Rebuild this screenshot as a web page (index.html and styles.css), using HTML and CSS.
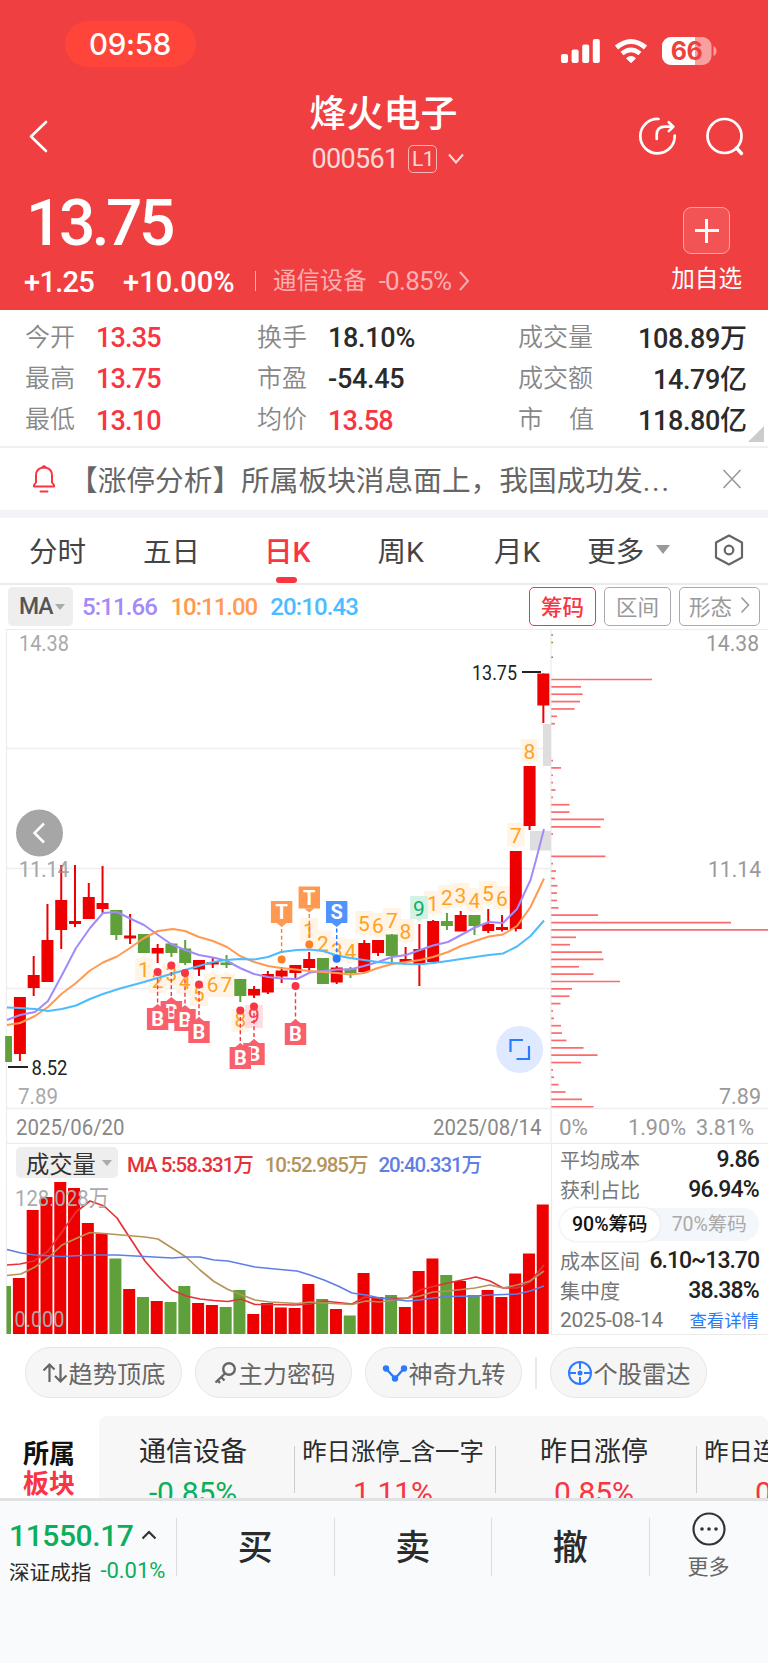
FILE: index.html
```html
<!DOCTYPE html>
<html lang="zh-CN">
<head>
<meta charset="utf-8">
<title>烽火电子</title>
<link rel="stylesheet" href="styles.css">
</head>
<body>
<header class="head">
  <div class="status">
    <span class="clock">09:58</span>
    <span class="signals">
      <svg width="39" height="28" viewBox="0 0 39 28" fill="#fff"><rect x="0" y="17" width="7" height="9" rx="2"/><rect x="10.6" y="12.500" width="7" height="13.500" rx="2"/><rect x="21.200" y="7.500" width="7" height="18.500" rx="2"/><rect x="31.800" y="2" width="7" height="24" rx="2"/></svg>
      <svg class="wifi" width="34" height="28" viewBox="0 0 34 28" fill="none" stroke="#fff" stroke-width="5"><path d="M2.500 10.500Q17-1.500 31.500 10.500"/><path d="M8 16.500Q17 9.200 26 16.500" stroke-width="4.600"/><path d="M12 21.200Q17 16.800 22 21.200L17 26.200Z" fill="#fff" stroke="none"/></svg>
      <svg width="55" height="28" viewBox="0 0 55 28"><defs><clipPath id="bt"><rect width="49.500" height="28" rx="9"/></clipPath></defs><g clip-path="url(#bt)"><rect width="50" height="28" fill="#f89fa0"/><rect width="33" height="28" fill="#fff"/></g><path d="M51.500 9q3 1.500 3 5t-3 5z" fill="#f89fa0"/><text x="24.500" y="23" text-anchor="middle" class="bat">66</text></svg>
    </span>
  </div>
  <div class="titlebar">
    <svg class="back" width="20" height="34" viewBox="0 0 20 34" fill="none" stroke="#fff" stroke-width="2.600" stroke-linecap="round" stroke-linejoin="round"><path d="M17 3 2 17.500 17 32"/></svg>
    <div class="title">
      <h1>烽火电子</h1>
      <div class="code"><span class="num">000561</span><span class="lv">L1</span><svg width="16" height="12" viewBox="0 0 16 12" fill="none" stroke="#fcd9d9" stroke-width="2"><path d="M1 1.500 8 9.500 15 1.500"/></svg></div>
    </div>
    <div class="acts">
      <svg width="40" height="40" viewBox="0 0 40 40" fill="none" stroke="#fff" stroke-width="2.700" stroke-linecap="round" stroke-linejoin="round"><path d="M20.500 2A17.200 17.200 0 1 0 36.700 18.500"/><path d="M18.700 22V18Q18.700 9.700 27 9.700H35"/><path d="M30.800 5.300 35.200 9.700 30.800 14.100"/></svg>
      <svg width="40" height="40" viewBox="0 0 40 40" fill="none" stroke="#fff" stroke-width="2.700" stroke-linecap="round"><circle cx="19.500" cy="19" r="17"/><path d="M31.500 31 36.500 36.500" stroke-width="3.400"/></svg>
    </div>
  </div>
  <div class="quote">
    <div class="ql">
      <div class="price">13.75</div>
      <div class="chg"><b>+1.25</b><b class="pct">+10.00%</b><i></i><span>通信设备</span><em>-0.85%</em><svg width="12" height="22" viewBox="0 0 12 22" fill="none" stroke="#f9b0b0" stroke-width="2"><path d="M2 2 10 11 2 20"/></svg></div>
    </div>
    <div class="add"><span class="plus"></span><span>加自选</span></div>
  </div>
</header>

<section class="stats">
  <dl><dt>今开</dt><dd class="red">13.35</dd><dt>最高</dt><dd class="red">13.75</dd><dt>最低</dt><dd class="red">13.10</dd></dl>
  <dl><dt>换手</dt><dd>18.10%</dd><dt>市盈</dt><dd>-54.45</dd><dt>均价</dt><dd class="red">13.58</dd></dl>
  <dl class="wide"><dt>成交量</dt><dd>108.89万</dd><dt>成交额</dt><dd>14.79亿</dd><dt class="jf"><span>市</span><span>值</span></dt><dd>118.80亿</dd></dl>
  <i class="corner"></i>
</section>

<section class="notice">
  <svg width="26" height="30" viewBox="0 0 26 30" fill="none" stroke="#f93443" stroke-width="2" stroke-linejoin="round" stroke-linecap="round"><path d="M3 22.500V21l2-2.500V11.500Q5 4 13 3.500 21 4 21 11.500v7L23 21v1.500Z"/><path d="M11.500 3q1.500-1.500 3 0M9.500 27.500h7"/></svg>
  <p>【涨停分析】所属板块消息面上，我国成功发<span>...</span></p>
  <svg width="20" height="20" viewBox="0 0 20 20" stroke="#999" stroke-width="1.600"><path d="M1.500 1 18.500 19M18.500 1 1.500 19"/></svg>
</section>

<nav class="tabs">
  <span>分时</span><span>五日</span><span class="on">日K</span><span>周K</span><span>月K</span><span class="more">更多<i class="tri"></i></span>
  <svg width="30" height="32" viewBox="0 0 30 32" fill="none" stroke="#666" stroke-width="2.200" stroke-linejoin="round"><path d="M15 1.500 28 8.500V23.500L15 30.500 2 23.500V8.500Z"/><circle cx="15" cy="16" r="4.300"/></svg>
</nav>

<section class="mabar">
  <span class="sel">MA<i class="tri"></i></span>
  <span class="m5">5:11.66</span><span class="m10">10:11.00</span><span class="m20">20:10.43</span>
  <span class="btns"><button class="on">筹码</button><button>区间</button><button class="go">形态<svg width="10" height="18" viewBox="0 0 10 18" fill="none" stroke="#999" stroke-width="1.600"><path d="M1.500 1.500 8.500 9 1.500 16.500"/></svg></button></span>
</section>

<svg id="kline" class="kline" width="768" height="515" viewBox="0 629 768 515"></svg>

<section class="lower">
  <div class="vol">
    <div class="volhead"><span class="sel">成交量<i class="tri"></i></span><span class="v5">MA 5:58.331万</span><span class="v10">10:52.985万</span><span class="v20">20:40.331万</span></div>
    <svg id="volume" class="volsvg" width="551" height="154" viewBox="0 1181 551 154"></svg>
  </div>
  <aside class="chips">
    <p><span>平均成本</span><b>9.86</b></p>
    <p><span>获利占比</span><b>96.94%</b></p>
    <div class="seg"><span class="on">90%筹码</span><span>70%筹码</span></div>
    <p><span>成本区间</span><b>6.10~13.70</b></p>
    <p><span>集中度</span><b>38.38%</b></p>
    <p class="last"><span>2025-08-14</span><a>查看详情</a></p>
  </aside>
</section>

<section class="tools">
  <span class="tool"><svg width="26" height="26" viewBox="0 0 26 26" fill="none" stroke="#666" stroke-width="2.200"><path d="M7.500 22V4.500M1.500 10.500 7.500 4.500 12.500 9.500M18.500 4V21.500M13 16 18.500 21.500 24.500 15.500"/></svg>趋势顶底</span>
  <span class="tool"><svg width="26" height="26" viewBox="0 0 26 26" fill="none" stroke="#666" stroke-width="2.400"><circle cx="17" cy="9" r="5.800"/><path d="M13 13.500 3.500 22.500M9 17 12.500 20.500M5.500 20 8 23"/></svg>主力密码</span>
  <span class="tool"><svg width="26" height="26" viewBox="0 0 26 26" fill="#2b7bff" stroke="#2b7bff" stroke-width="2.400"><path d="M4 8.500 13 18.500 22 8.500" fill="none"/><circle cx="4" cy="8.500" r="2"/><circle cx="22" cy="8.500" r="2"/><circle cx="13" cy="18.500" r="2"/></svg>神奇九转</span>
  <i class="bar"></i>
  <span class="tool"><svg width="26" height="26" viewBox="0 0 26 26" fill="none" stroke="#2b7bff" stroke-width="2"><circle cx="13" cy="13" r="11"/><path d="M13 2v7M13 17v7M2 13h7M17 13h7"/><circle cx="13" cy="13" r="1.500" fill="#2b7bff"/></svg>个股雷达</span>
</section>

<section class="sector">
  <div class="slabel"><b>所属</b><b class="red">板块</b></div>
  <div class="slist">
    <div><span>通信设备</span><em class="green">-0.85%</em></div>
    <div><span class="sm">昨日涨停_含一字</span><em>1.11%</em></div>
    <div><span>昨日涨停</span><em>0.85%</em></div>
    <div><span class="sm">昨日连板_含一字</span><em>0.62%</em></div>
  </div>
</section>

<footer class="foot">
  <div class="idx">
    <div class="r1">11550.17<svg width="16" height="10" viewBox="0 0 16 10" fill="none" stroke="#333" stroke-width="2.200"><path d="M1.500 8.500 8 2 14.500 8.500"/></svg></div>
    <div class="r2"><span>深证成指</span><em>-0.01%</em></div>
  </div>
  <div class="act">买</div><div class="act">卖</div><div class="act">撤</div>
  <div class="etc"><svg width="34" height="34" viewBox="0 0 34 34"><circle cx="17" cy="17" r="15.500" fill="none" stroke="#333" stroke-width="2.200"/><g fill="#333"><circle cx="10" cy="17" r="1.800"/><circle cx="17" cy="17" r="1.800"/><circle cx="24" cy="17" r="1.800"/></g></svg><span>更多</span></div>
</footer>
<script src="chart.js"></script>
</body>
</html>
```
FILE: styles.css
```css
* { box-sizing: border-box; margin: 0; padding: 0; }
body { width: 768px; height: 1663px; overflow: hidden; background: #fff; color: #2b2b2b; font-family: Roboto, "Noto Sans CJK SC", sans-serif; }
i, em { font-style: normal; }
svg { display: block; flex: none; }
.red { color: #f93443; }

.head { height: 309.5px; background: #f03f41; color: #fff; }
.status { height: 88px; padding: 21px 51px 0 65px; display: flex; justify-content: space-between; }
.clock { width: 131px; height: 46px; border-radius: 23px; background: #ff453a; font: 500 29.5px/46px Inter, sans-serif; text-align: center; letter-spacing: -0.3px; padding-right: 1px; }
.signals { display: flex; padding-top: 16px; }
.wifi { margin: 0 14px; }
.bat { font: 700 25px Inter, sans-serif; fill: #f03f41; letter-spacing: -0.5px; }
.titlebar { height: 98px; display: flex; justify-content: space-between; padding: 0 23px 0 29px; }
.back { margin-top: 31px; }
.title { width: 240px; margin-left: 80px; padding-top: 2px; text-align: center; }
.title h1 { font-size: 37px; line-height: 50px; font-weight: 500; }
.code { display: flex; align-items: center; justify-content: center; height: 38px; padding-left: 9px; color: #fcd9d9; font-size: 27px; letter-spacing: -0.7px; }
.lv { width: 29px; height: 28px; margin: 0 11px 0 10px; border: 1.5px solid #f9b5b5; border-radius: 5px; font-size: 21px; line-height: 26px; text-align: center; }
.acts { display: flex; gap: 27px; padding-top: 29px; }
.quote { display: flex; justify-content: space-between; padding: 0 26px 0 24px; }
.price { font-size: 64px; line-height: 76px; height: 74px; font-weight: 500; letter-spacing: -3.5px; padding-left: 2px; }
.chg { display: flex; align-items: center; height: 42px; color: #f9b0b0; font-size: 24px; }
.chg b { color: #fff; font-size: 29px; font-weight: 500; letter-spacing: -0.7px; padding-top: 1px; }
.chg .pct { margin-left: 29px; letter-spacing: 0; }
.chg i { width: 1.5px; height: 20px; background: #f9b0b0; margin: 0 17px 0 20px; }
.chg span { font-size: 23.4px; padding-bottom: 4px; }
.chg em { margin: 0 7px 0 12px; font-size: 26px; letter-spacing: -0.7px; }
.add { display: flex; flex-direction: column; align-items: center; padding-top: 21px; font-size: 23.6px; line-height: 51px; }
.plus { width: 47px; height: 47px; border: 1.5px solid #f9a5a6; border-radius: 8px; background: linear-gradient(#fff, #fff) center/24px 3px no-repeat, linear-gradient(#fff, #fff) center/3px 24px no-repeat, #f25354; }

.stats { position: relative; height: 138.5px; padding: 6px 21px 0 25px; display: flex; border-bottom: 2px solid #f0f0f0; }
.stats dl { display: grid; grid-template-columns: 71px auto; grid-auto-rows: 41.3px; align-items: center; width: 232px; }
.stats dl:nth-child(2) { grid-template-columns: 71px auto; width: 261px; }
.stats .wide { width: 229px; grid-template-columns: 76px 1fr; }
.stats dt { font-size: 25px; color: #888; font-weight: 350; padding-bottom: 3px; }
.stats dd { font-size: 27px; font-weight: 500; letter-spacing: -0.8px; padding-top: 4px; }
.stats dl:nth-child(2) dd { letter-spacing: -0.3px; }
.stats dl:nth-child(2) dd.red { letter-spacing: -0.8px; }
.stats .wide dd { text-align: right; padding-top: 0; letter-spacing: -0.4px; margin-right: 0.5px; }
.jf { display: flex; justify-content: space-between; }
.corner { position: absolute; right: 4px; bottom: 4px; border: solid transparent; border-width: 0 0 16px 16px; border-bottom-color: #ccc; }

.notice { display: flex; align-items: center; height: 70px; padding: 0 26px 1px 31px; border-bottom: 8px solid #f2f4f8; color: #666; }
.notice p { flex: 1; margin-left: 12px; font-size: 28.7px; white-space: nowrap; padding-bottom: 1px; }
.notice p span { letter-spacing: 1.8px; }
.tabs { height: 67px; padding: 0 24px 2px 29px; display: flex; align-items: center; border-bottom: 2px solid #ebebeb; font-size: 28.5px; color: #444; }
.tabs span { position: relative; margin-right: 57px; white-space: nowrap; }
.tabs span:nth-child(2) { margin-right: 64px; }
.tabs span:nth-child(3) { margin-right: 67px; }
.tabs span:nth-child(4) { margin-right: 70px; }
.tabs span:nth-child(5) { margin-right: 47px; }
.tabs .more { display: flex; align-items: center; gap: 12px; margin-right: auto; }
.tabs .on { color: #f93443; font-weight: 500; }
.tabs .on::after { content: ""; position: absolute; left: 12px; bottom: -13px; width: 21px; height: 6px; border-radius: 3px; background: #f93443; }
.tri { border: solid transparent; border-width: 9px 7px 0; border-top-color: #999; }

.mabar { height: 44px; display: flex; align-items: center; padding: 0 8px 1px; font-size: 24px; }
.sel { display: flex; align-items: center; background: #eee; border-radius: 5px; color: #555; }
.mabar .sel { width: 65px; height: 39px; padding-left: 11px; font-weight: 500; font-size: 23px; letter-spacing: -1px; gap: 2px; }
.sel .tri { flex: none; border-width: 6px 5px 0; border-top-color: #aaa; }
.mabar .m5, .m10, .m20 { margin-left: 9px; letter-spacing: -0.9px; color: #a48af8; font-weight: 500; }
.mabar .m10 { margin-left: 13.5px; letter-spacing: -1px; color: #ff9a52; }
.mabar .m20 { margin-left: 13px; letter-spacing: -0.9px; color: #4cbbff; }
.btns { margin-left: auto; display: flex; gap: 8px; }
.btns button { width: 67px; height: 39px; padding-bottom: 3px; border: 1.600px solid #aaa; border-radius: 5px; background: #fff; color: #999; font: 21.500px "Noto Sans CJK SC", sans-serif; }
.btns .on { border-color: #f93443; color: #f93443; font-weight: 500; }
.btns .go { width: 81px; display: flex; align-items: center; justify-content: center; gap: 8px; }

.lower { display: flex; height: 191px; }
.vol { width: 551px; }
.volhead { display: flex; align-items: center; height: 37px; margin-left: 6px; border-left: 1.3px solid #ededed; padding-left: 9px; font-size: 20.5px; font-weight: 500; letter-spacing: -1.05px; white-space: nowrap; }
.volhead .sel { width: 102px; height: 31px; padding-left: 10px; font-size: 23.300px; font-weight: 400; letter-spacing: 0; color: #333; gap: 6px; }
.v5 { margin-left: 9px; color: #e53238; }
.v10 { margin-left: 12px; color: #b5935a; }
.v20 { margin-left: 11px; color: #5f7fe6; }
.chips { width: 217px; border-left: 1.500px solid #ebebeb; border-bottom: 1.500px solid #ebebeb; padding: 1px 9px 0 8px; }
.chips p { display: flex; justify-content: space-between; align-items: center; height: 29.500px; font-size: 20px; color: #777; white-space: nowrap; }
.chips b { font-size: 23px; font-weight: 500; color: #222; letter-spacing: -0.8px; }
.chips p:nth-child(4) b { letter-spacing: -1px; }
.chips a { color: #2a7bf6; font-size: 17.400px; }
.chips .last span { font-size: 21px; letter-spacing: -0.3px; }
.seg { display: flex; height: 33px; margin: 4px 0 5px; border-radius: 17px; background: #f3f6fa; font-size: 19.500px; line-height: 33px; text-align: center; color: #aaa; }
.seg span { flex: 1; }
.seg .on { background: #fff; border-radius: 17px; color: #111; font-weight: 500; box-shadow: 0 0 3px #ddd; }

.tools { height: 81px; display: flex; align-items: center; padding-left: 25px; gap: 13px; padding-bottom: 6px; }
.tool { width: 157px; height: 51px; display: flex; align-items: center; justify-content: center; gap: 1px; border: 1px solid #e6e6e6; border-radius: 26px; background: #f6f6f6; color: #666; font-size: 24.200px; white-space: nowrap; }
.bar { width: 2px; height: 32px; background: #eaeaea; }

.sector { display: flex; height: 82px; overflow: hidden; }
.slabel { width: 99px; padding: 23px 0 0 23px; font-size: 26px; line-height: 31px; color: #111; }
.slabel b { display: block; }
.slabel .red { color: #f93443; line-height: 28px; }
.slist { display: flex; width: 669px; flex: none; overflow: hidden; border-radius: 8px 8px 0 0; background: #f7f7f7; }
.slist div { position: relative; width: 201px; flex: none; text-align: center; white-space: nowrap; }
.slist div:first-child { width: 195px; padding-right: 7px; }
.slist div + div { padding-right: 3px; }
.slist div + div::before { content: ""; position: absolute; left: 0; top: 30px; height: 47px; width: 1px; background: #ccc; }
.slist span { display: block; height: 58px; line-height: 72px; font-size: 27px; }
.slist .sm { font-size: 24.400px; }
.slist em { display: block; line-height: 37px; font-size: 30px; color: #f93443; font-weight: 400; letter-spacing: -0.100px; }
.slist .green, .idx em { color: #0aae5b; }

.foot { height: 165px; border-top: 3px solid #e0e1e3; background: #f9fafc; display: flex; }
.idx { width: 176px; padding: 14px 0 0 9px; white-space: nowrap; }
.r1 { display: flex; align-items: center; gap: 7px; height: 40px; font-size: 30px; font-weight: 500; color: #0aae5b; letter-spacing: -0.400px; }
.r2 { display: flex; align-items: center; height: 31px; font-size: 20.600px; }
.r2 em { margin-left: 9px; font-size: 22px; letter-spacing: 0; }
.act { width: 157.500px; height: 58px; margin-top: 17px; border-left: 1px solid #dcdde0; text-align: center; font-size: 35px; line-height: 62px; font-weight: 500; }
.etc { width: 119px; height: 58px; margin-top: 17px; border-left: 1px solid #dcdde0; font-size: 21px; line-height: 32px; text-align: center; color: #666; }
.etc svg { margin: -6px auto 5px; }

.kline text, .volsvg text { font-size: 22.500px; fill: #aaa; }
.kline .dk { fill: #222; font-size: 21px; }
.kline .dt { fill: #888; }
.kline .rt { fill: #999; }
.kline .td { fill: #ffa21f; font-size: 21px; text-anchor: middle; }
.kline .mk { fill: #fff; font-size: 20px; font-weight: 700; text-anchor: middle; }
```
FILE: chart.js
```js
const R = '#ee0000', G = '#5fa03a';
const line = (x1, y1, x2, y2, c, w = 1.5) => `<path d="M${x1} ${y1}L${x2} ${y2}" stroke="${c}" stroke-width="${w}"/>`;
const rect = (x, y, w, h, c) => `<rect x="${x}" y="${y}" width="${w}" height="${h}" fill="${c}"/>`;
const poly = (p, c, w = 2) => `<polyline points="${p}" fill="none" stroke="${c}" stroke-width="${w}" stroke-linejoin="round"/>`;
const label = (x, y, len, t, cls = '') => `<text x="${x}" y="${y}" textLength="${len}" lengthAdjust="spacingAndGlyphs" class="${cls}">${t}</text>`;

// each candle: colour, body top, body bottom, wick top, wick bottom
const candles = [
  [0, 1036, 1062, 1036, 1062], [1, 997, 1054, 997, 1061], [1, 975, 988, 956, 996], [1, 940, 982, 904, 982],
  [1, 900, 930, 865, 949], [1, 921, 924, 865, 927], [1, 897, 919, 883, 919], [1, 903, 909, 866, 913],
  [0, 910, 935, 910, 940], [1, 935.5, 938.5, 914, 944], [0, 934, 953, 934, 953], [1, 948, 953.5, 944, 963],
  [0, 943.5, 953, 943, 957], [0, 948.5, 963, 940, 965], [1, 960, 969.5, 960, 976], [1, 962, 964.5, 957, 968],
  [0, 962.5, 965, 955, 968], [0, 979, 996, 979, 1002], [1, 989, 995.5, 986, 998], [1, 974, 992.5, 971, 994],
  [1, 970.5, 976.5, 967, 983], [1, 965, 973, 965, 978], [1, 959, 968, 952, 971], [0, 958, 984, 958, 984],
  [1, 967.5, 982.5, 966, 984], [0, 968.5, 973, 967, 978], [1, 943, 972, 940, 972], [1, 940, 953, 940, 956],
  [0, 934.5, 956, 934, 963], [1, 959, 962, 947, 962], [1, 949, 964, 924, 986], [1, 921, 962, 920, 962],
  [0, 921, 926, 913, 930], [1, 915, 931.5, 911, 931], [0, 915, 926, 915, 935], [1, 924, 931, 909, 933],
  [1, 927, 930, 915, 931.5], [1, 851, 929, 851, 931.5], [1, 766, 826, 766, 830], [1, 673.5, 705.5, 673.5, 723]
];
const cx = i => 19.9 + 13.775 * (i - 1);

let s = '';
[629.3, 748.5, 868.5, 988.5, 1108.5, 1143.5].forEach(y => s += line(6, y, y === 629.3 || y > 1100 ? 768 : 551, y, '#ededed', 1.3));
s += line(6.5, 629, 6.5, 1144, '#ededed', 1.3) + line(551, 629, 551, 1144, '#ededed', 1.3);
s += rect(543, 724, 8, 42, '#dedede') + rect(530, 831, 21, 19.500, '#dedede');

const tag = (x, b, t, dir, bg = '#fff4e6', fg = '') => {
  const top = dir > 0 ? b - 20 : b - 18;
  const tip = dir > 0 ? `M${x - 4} ${top + 22.5}h8l-4 3z` : `M${x - 4} ${top}h8l-4 -3z`;
  return rect(x - 8.8, top, 17.6, 23, bg) + `<path d="${tip}" fill="${bg}"/><text class="td" x="${x}" y="${b}" ${fg ? `style="fill:${fg}"` : ''}>${t}</text>`;
};
[[144, 976.5, 1], [157.6, 988, 2], [171.3, 981, 3], [185, 989, 4], [199, 1001, 5], [212.7, 992, 6], [226.5, 992, 7], [240.3, 1027, 8]].forEach(a => s += tag(...a, -1));
s += tag(254, 1023, 9, -1, '#ffdde0', '#f0404c');
[[309, 938, 1], [323, 950.5, 2], [337, 957.5, 3], [350.5, 959, 4], [364, 931, 5], [378, 933, 6], [392, 928, 7], [405.5, 939, 8], [433, 911, 1], [447, 905, 2], [460.5, 903, 3], [474.5, 908, 4], [488, 901, 5], [502, 906, 6], [516, 843, 7], [529.5, 759, 8]].forEach(a => s += tag(...a, 1));
s += tag(419, 916, 9, 1, '#d3f2e4', '#10ae66');

s += label(19, 651, 50, '14.38') + label(19, 877, 50, '11.14');
candles.forEach((c, i) => {
  const k = c[0] ? R : G, x = cx(i);
  s += line(x, c[3], x, c[4], k, 2);
  s += i ? rect(x - 6, c[1], 12, c[2] - c[1], k) : rect(7, c[1], 5, c[2] - c[1], k);
});
s += `<g opacity=".55">${label(19, 877, 50, '11.14')}</g>`;
s += poly('7,1020 20,1015 35,1012 48,1001 62,975 76,948 90,928 103,913 117,912 130,918.5 144,925 158,935 171,944 185,950 199,955 213,957.5 226,960.5 240,968 254,974 268,977 282,978.5 297,979 310,972.5 323,971 337,969.5 350,969.5 364,966 378,962 392,957 406,955 420,950 433,945.5 448,942 461,935 475,927.5 489,922 503,923 517,909 530.5,880 536,860 544,829', '#a48af8');
s += poly('7,1025 20,1023 35,1016 48,1007 62,993.5 76,983 90,970.5 103,962.5 117,956.5 130,948 144,938 158,931 173,929 185,931 199,937 213,941 227,947 240,956 254,962 268,966 281,968 295,969.5 310,971 323,972 337,973 350,974.5 364,973 378,968 392,964 406,962 420,960 433,957 448,952 461,946 475,941 489,936.5 503,934.5 517,926 530.5,907 544,878.5', '#ff9a52');
s += poly('7,1007.5 20,1008 35,1009 48,1011 62,1009 76,1005.5 90,999 103,994 120,988.5 144,982 171,974 199,966 213,962 226,960 240,959 254,959.5 268,957 281,952 297,950 310,949.5 323,951 337,955.5 350,958 364,960 378,962 392,963 406,964 420,964.3 433,963 448,961 461,959 475,957 489,955 503,953.5 517,946.5 530.5,936 544,920.5', '#4cbbff');

// trade markers: x, dot y, box top, letter, box colour, dot colour
const mark = (x, d, top, t, bg, dot) => {
  const up = d < top;
  const near = up ? top - 3 : top + 25;
  const tip = up ? `M${x - 5} ${top}l5 -4 5 4z` : `M${x - 5} ${top + 22}l5 4 5-4z`;
  s += `<path d="M${x} ${d}V${near}" stroke="${dot}" stroke-width="1.4" stroke-dasharray="4 2.600"/><circle cx="${x}" cy="${d}" r="4" fill="${dot}"/>`
    + `<rect x="${x - 10.7}" y="${top}" width="21.4" height="22" fill="${bg}"/><path d="${tip}" fill="${bg}"/><text class="mk" x="${x}" y="${top + 18}">${t}</text>`;
};
[[171.3, 965.5, 1001], [157.6, 972, 1008], [185, 973, 1009], [199, 984.5, 1021], [254, 1006.5, 1043], [240.3, 1010.5, 1047], [295.5, 986, 1023]].forEach(a => mark(...a, 'B', '#f9606c', '#f93443'));
mark(281.6, 959.5, 901, 'T', '#ff9850', '#ff7f22');
mark(309.3, 944.5, 886.5, 'T', '#ff9850', '#ff7f22');
mark(336.7, 958.8, 901, 'S', '#5093ff', '#2378ff');

// chip distribution, one bar every 7.366px
const chips = [652, 581, 582.7, 580, 574.5, 557, 555, 0, 0, 0, 0, 553, 561, 553, 553, 555.5, 553, 569.5, 569.5, 604, 600.5, 553, 0, 0, 605.5, 553, 556, 555, 557.5, 557, 557, 558.5, 598, 731, 768, 576, 570, 602, 603.5, 579, 593.5, 620, 572, 569.5, 560.5, 553, 554, 561, 562, 566.5, 583.5, 597.5, 581, 553, 554, 558.5, 565.5, 582, 593.5];
chips.forEach((e, i) => { if (e) s += line(551.3, 679.5 + i * 7.366, e, 679.5 + i * 7.366, '#fb6a6c', 1.7); });
[635, 642.5, 657.300].forEach(y => s += line(551.3, y, 553, y, G, 1.500));

s += label(18, 1103.500, 40, '7.89') + label(31.500, 1075, 36, '8.52', 'dk') + line(8, 1067, 28, 1067, '#222', 2);
s += label(472, 680, 45, '13.75', 'dk') + line(522, 672, 541, 672, '#222', 2);
s += label(706, 651, 53, '14.38', 'rt') + label(708, 877, 53, '11.14', 'rt') + label(719, 1103.500, 42, '7.89', 'rt');
s += label(16, 1135, 108.500, '2025/06/20', 'dt') + label(433, 1135, 108.500, '2025/08/14', 'dt');
s += label(559, 1135, 29, '0%', 'rt') + label(628, 1135, 58, '1.90%', 'rt') + label(696, 1135, 58, '3.81%', 'rt');
s += '<circle cx="39.500" cy="833" r="23.500" fill="#a6a6a6"/><path d="M44 823.500 34.500 833 44 842.500" fill="none" stroke="#fff" stroke-width="2.500"/>';
s += '<circle cx="519.700" cy="1049.500" r="23.500" fill="#dfe9ff"/><path d="M510.500 1052V1040H523M529 1046V1059H516.500" fill="none" stroke="#2b7bff" stroke-width="2.200"/>';
document.getElementById('kline').innerHTML = s;

const tops = [1286, 1278, 1210, 1197, 1182, 1188, 1223, 1233.5, 1258.5, 1289, 1297, 1301, 1302, 1286, 1303, 1305, 1307, 1290, 1314, 1303, 1307.5, 1308, 1284, 1299, 1309, 1315.5, 1273, 1297, 1295, 1307, 1271, 1258.5, 1275, 1281, 1295, 1290, 1297, 1273.5, 1253.5, 1204.5];
let v = line(6.5, 1181, 6.5, 1334, '#ededed', 1.3);
tops.forEach((t, i) => {
  const k = candles[i][0] ? R : G, x = 18.9 + 13.785 * (i - 1);
  v += i ? rect(x - 6, t, 12, 1334 - t, k) : rect(6.5, t, 4.500, 1334 - t, k);
});
v += poly('7,1265 20,1264 34,1261 48,1251 62,1232 76,1212 90,1201 104,1206 117,1218 130,1238 145,1261 158,1276 172,1290 186,1296 200,1299 214,1300.5 228,1301.5 241,1299 255,1304.5 270,1304.5 295,1305 310,1304 324,1301 338,1302.5 352,1304 365,1297 380,1298.5 408,1298 420,1290 435,1286 448,1283 462,1280 476,1277 490,1281 503,1288 517,1288 530,1282 544,1265', '#e53238', 1.7);
v += poly('7,1275.5 21,1274 35,1267 48,1258 62,1245 76,1238.5 90,1232.5 104,1233.5 145,1237 158,1239 172,1248 186,1257 200,1270 214,1281.5 228,1289.5 242,1295 255,1300 270,1302 297,1303.5 310,1302 324,1303 352,1304.5 366,1301 380,1302 408,1298 420,1296 433,1292 448,1291 475,1288 490,1285 503,1288 517,1285 530,1281 544,1271', '#b5935a', 1.7);
v += poly('7,1249.5 21,1253 35,1255 62,1256.5 90,1255 117,1255 172,1258 186,1257 200,1257 214,1260 228,1261 255,1267 275,1269 297,1271 310,1275 324,1280 338,1286 352,1293 366,1295 380,1298 408,1301 420,1300 433,1298 448,1296.5 475,1296 490,1295 517,1294 530,1291 544,1286', '#5f7fe6', 1.7);
v += label(15, 1206, 94, '128.028万') + label(14.500, 1327, 50, '0.000');
document.getElementById('volume').innerHTML = v;
```
